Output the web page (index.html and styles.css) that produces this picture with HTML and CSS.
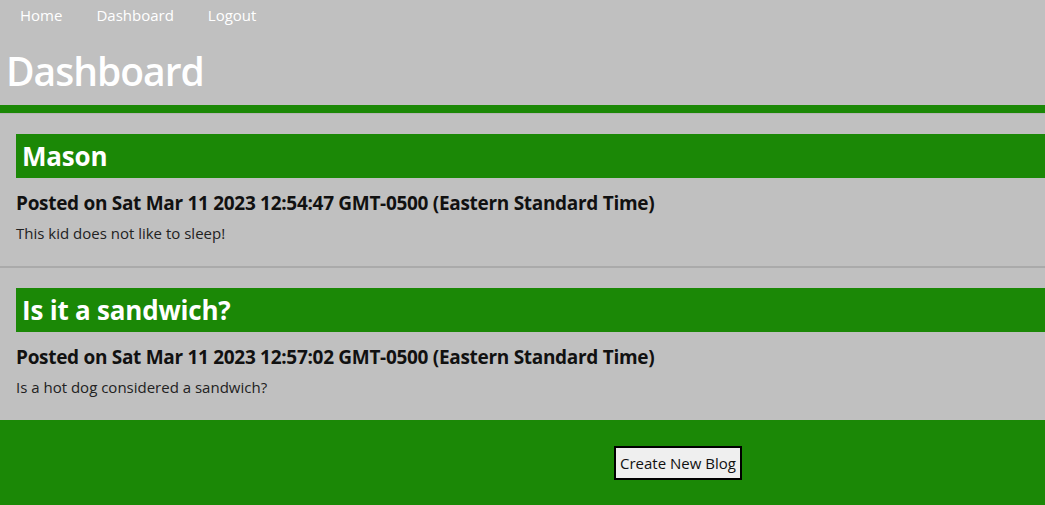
FILE: index.html
```html
<!DOCTYPE html>
<html lang="en">
<head>
<meta charset="utf-8">
<title>Dashboard</title>
<link rel="stylesheet" href="styles.css">
</head>
<body>
<header class="site-header">
  <nav class="nav">
    <a class="nav-link" href="#">Home</a>
    <a class="nav-link" href="#">Dashboard</a>
    <a class="nav-link" href="#">Logout</a>
  </nav>
  <h1 class="page-title">Dashboard</h1>
</header>
<main class="posts">
  <article class="post">
    <h2 class="post-title">Mason</h2>
    <h3 class="post-meta">Posted on Sat Mar 11 2023 12:54:47 GMT-0500 (Eastern Standard Time)</h3>
    <p class="post-body">This kid does not like to sleep!</p>
  </article>
  <article class="post">
    <h2 class="post-title">Is it a sandwich?</h2>
    <h3 class="post-meta">Posted on Sat Mar 11 2023 12:57:02 GMT-0500 (Eastern Standard Time)</h3>
    <p class="post-body">Is a hot dog considered a sandwich?</p>
  </article>
</main>
<footer class="site-footer">
  <button class="new-blog-btn" type="button">Create New Blog</button>
</footer>
</body>
</html>
```
FILE: styles.css
```css
html, body {
  margin: 0;
  padding: 0;
  background: #c0c0c0;
  font-family: "Open Sans", "Noto Sans", sans-serif;
  color: #111;
}

.site-header {
  border-bottom: 8px solid #1b8806;
}

.nav {
  display: flex;
  gap: 34px;
  padding: 0 20px;
  height: 30px;
  box-sizing: border-box;
  align-items: center;
}

.nav-link {
  color: #fff;
  text-decoration: none;
  font-size: 15px;
}

.page-title {
  margin: 0;
  padding: 5px 6px 0;
  height: 70px;
  display: flex;
  align-items: center;
  color: #fff;
  font-size: 39px;
  letter-spacing: -1px;
  font-weight: 600;
}

.posts {
  display: flex;
  flex-direction: column;
  border-top: 1px solid #b5b5b5;
}

.post {
  height: 132px;
  padding: 20px 0 0 16px;
  border-bottom: 2px solid #aaaaaa;
}

.post:last-child {
  border-bottom: none;
}

.post-title {
  margin: 0;
  height: 44px;
  display: flex;
  align-items: center;
  padding-left: 6px;
  background: #1b8806;
  color: #fff;
  font-size: 26px;
  letter-spacing: -0.2px;
  font-weight: 700;
}

.post-meta {
  margin: 12px 0 0;
  font-size: 19px;
  letter-spacing: -0.3px;
  font-weight: 700;
  color: #111;
}

.post-body {
  margin: 7px 0 0;
  font-size: 15px;
  color: #222;
}

.site-footer {
  height: 85px;
  background: #1b8806;
  display: flex;
  align-items: center;
  padding-left: 614px;
}

.new-blog-btn {
  font-family: inherit;
  font-size: 15px;
  height: 34px;
  padding: 0 4px;
  background: #efefef;
  border: 2px solid #000;
  color: #111;
  border-radius: 0;
}
```
